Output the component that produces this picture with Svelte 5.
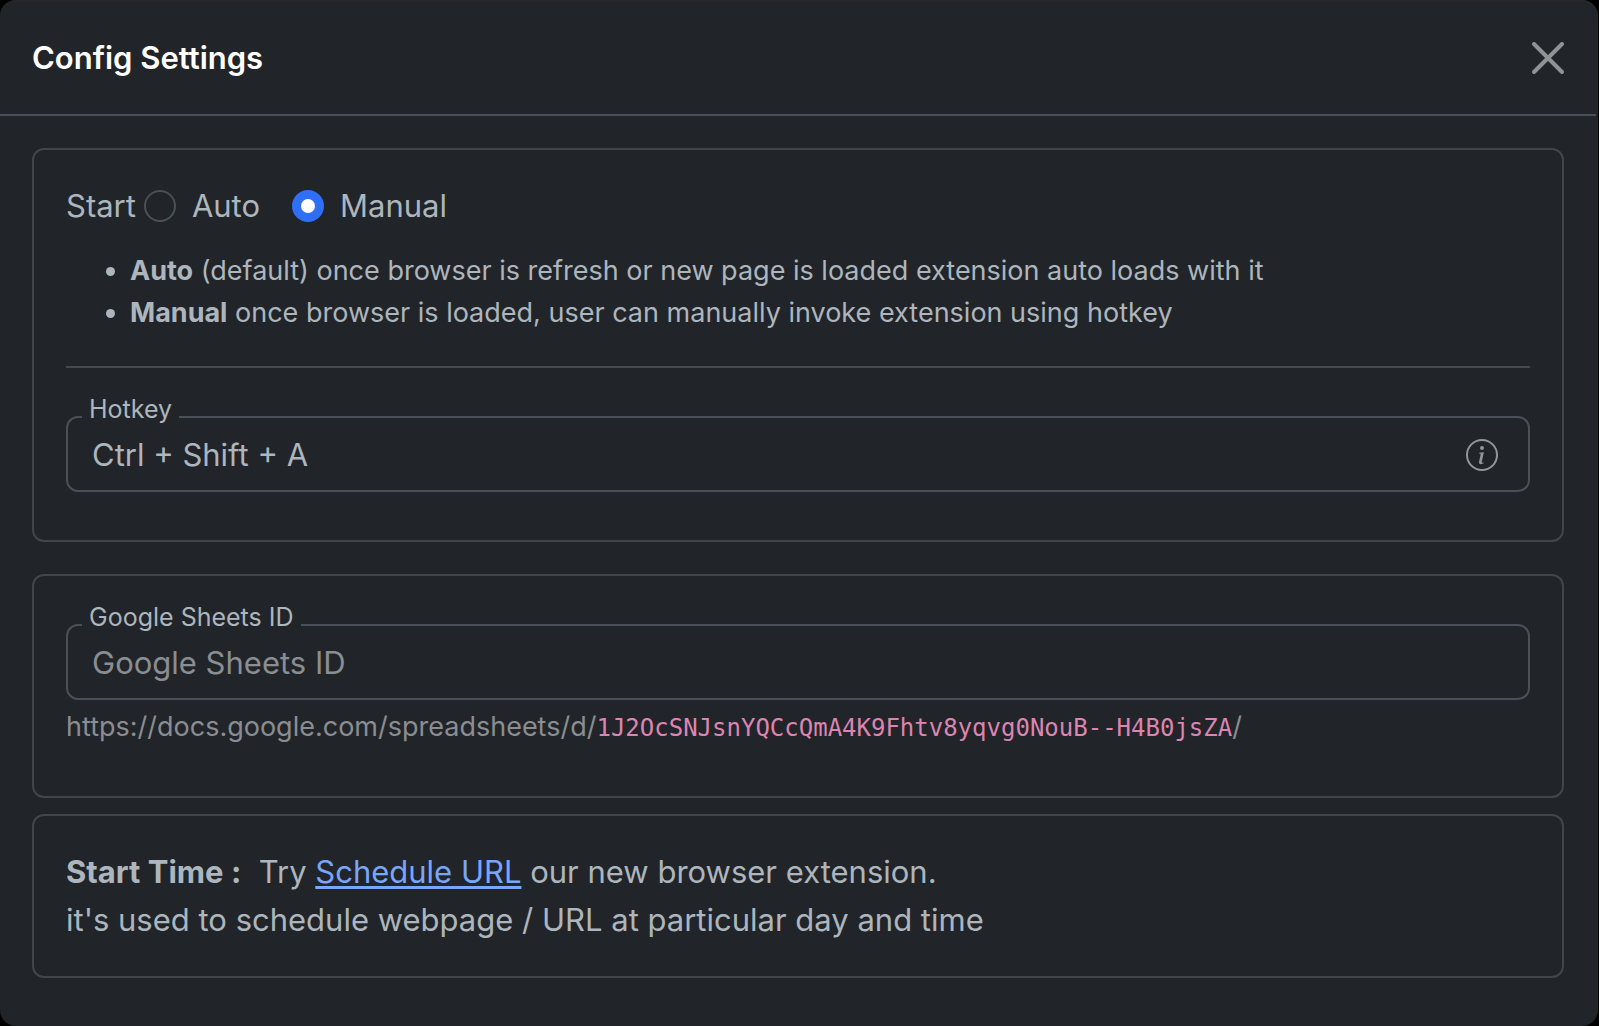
<script>
  let startMode = $state('manual');
  let hotkey = $state('Ctrl + Shift + A');
  let sheetId = $state('');
</script>

<main class="modal">
  <header class="modal-header">
    <h1>Config Settings</h1>
    <button class="close" type="button" aria-label="Close">
      <svg viewBox="0 0 32 32" aria-hidden="true">
        <path d="M2 2 30 30M30 2 2 30" />
      </svg>
    </button>
  </header>

  <div class="modal-body">
    <section class="card start">
      <div class="modes" role="radiogroup" aria-labelledby="start-label">
        <span id="start-label">Start</span>
        <label class="mode">
          <input type="radio" name="start" value="auto" bind:group={startMode} />
          Auto
        </label>
        <label class="mode">
          <input type="radio" name="start" value="manual" bind:group={startMode} />
          Manual
        </label>
      </div>
      <ul>
        <li><strong>Auto</strong> (default) once browser is refresh or new page is loaded extension auto loads with it</li>
        <li><strong>Manual</strong> once browser is loaded, user can manually invoke extension using hotkey</li>
      </ul>
      <hr />
      <div class="field">
        <label for="hotkey">Hotkey</label>
        <input id="hotkey" type="text" bind:value={hotkey} />
        <button class="info" type="button" aria-label="Hotkey information">
          <svg viewBox="0 0 16 16" aria-hidden="true">
            <path d="M8 15A7 7 0 1 1 8 1a7 7 0 0 1 0 14m0 1A8 8 0 1 0 8 0a8 8 0 0 0 0 16" />
            <path d="m8.930 6.588-2.290.287-.082.380.450.083c.294.070.352.176.288.469l-.738 3.468c-.194.897.105 1.319.808 1.319.545 0 1.178-.252 1.465-.598l.088-.416c-.200.176-.492.246-.686.246-.275 0-.375-.193-.304-.533zM9 4.500a1 1 0 1 1-2 0 1 1 0 0 1 2 0" />
          </svg>
        </button>
      </div>
    </section>

    <section class="card sheets">
      <div class="field">
        <label for="sheet-id">Google Sheets ID</label>
        <input id="sheet-id" type="text" placeholder="Google Sheets ID" bind:value={sheetId} />
      </div>
      <p class="hint">https://docs.google.com/spreadsheets/d/<code>1J2OcSNJsnYQCcQmA4K9Fhtv8yqvg0NouB--H4B0jsZA</code>/</p>
    </section>

    <section class="card schedule">
      <p><strong>Start Time :</strong>&nbsp; Try <a href="#schedule-url">Schedule URL</a> our new browser extension.</p>
      <p>it's used to schedule webpage / URL at particular day and time</p>
    </section>
  </div>
</main>

<style>
  :global(body) {
    margin: 0;
    background: #000;
  }

  .modal {
    box-sizing: border-box;
    min-height: 100vh;
    margin-right: 1px;
    padding-right: 2px;
    border-radius: 16px;
    background: #212529;
    box-shadow: inset 0 2px #272729;
    color: #adb5bd;
    font-family: Inter, "Liberation Sans", sans-serif;
    font-size: 31px;
    line-height: 48px;
  }

  .modal-header {
    display: flex;
    align-items: center;
    justify-content: space-between;
    padding: 34px 32px 32px;
    border-bottom: 2px solid #495057;
  }

  h1 {
    margin: 0;
    color: #fff;
    font-size: 31px;
    font-weight: 600;
    line-height: 48px;
  }

  button {
    display: flex;
    padding: 0;
    border: 0;
    background: none;
    cursor: pointer;
  }

  svg {
    width: 32px;
    height: 32px;
  }

  .close {
    color: #909294;
  }

  .close path {
    fill: none;
    stroke: currentColor;
    stroke-width: 4;
    stroke-linecap: round;
  }

  .modal-body {
    padding: 32px 32px 48px;
  }

  .card {
    padding: 32px;
    border: 2px solid #424649;
    border-radius: 12px;
  }

  .start {
    margin-bottom: 32px;
    padding-bottom: 48px;
  }

  .sheets {
    margin-bottom: 16px;
    padding: 48px 32px;
  }

  .modes {
    display: flex;
    align-items: center;
    gap: 32px;
    padding-bottom: 20px;
  }

  #start-label {
    margin-right: -24px;
  }

  .mode {
    display: flex;
    align-items: center;
    gap: 16px;
  }

  input[type='radio'] {
    appearance: none;
    box-sizing: border-box;
    width: 32px;
    height: 32px;
    margin: 0;
    border: 2px solid #495057;
    border-radius: 50%;
  }

  input[type='radio']:checked {
    border: 9px solid #2f6ff6;
    background: #fff;
  }

  ul {
    margin: 0;
    padding-left: 64px;
    font-size: 27px;
    line-height: 42px;
  }

  strong {
    font-weight: 700;
  }

  hr {
    height: 2px;
    margin: 32px 0 48px;
    border: 0;
    background: #464a4e;
  }

  .field {
    position: relative;
    display: flex;
    align-items: center;
    box-sizing: border-box;
    height: 76px;
    padding: 2px 30px 0 24px;
    border: 2px solid #495057;
    border-radius: 12px;
  }

  .field label {
    position: absolute;
    top: -27px;
    left: 14px;
    padding: 0 7px;
    background: #212529;
    font-size: 25px;
    line-height: 36px;
  }

  .field input {
    flex: 1;
    min-width: 0;
    padding: 0;
    border: 0;
    outline: 0;
    background: none;
    color: inherit;
    font: inherit;
  }

  .field input::placeholder {
    color: #8a8d91;
    opacity: 1;
  }

  .info {
    color: #909699;
  }

  .info path {
    fill: currentColor;
  }

  .hint {
    margin: 6px 0 0;
    color: #8a8d91;
    font-size: 27px;
    line-height: 42px;
  }

  code {
    color: #de84b0;
    font-family: "DejaVu Sans Mono", monospace;
    font-size: 24px;
    line-height: 1;
  }

  p {
    margin: 0;
  }

  a {
    color: #78a6fb;
    text-decoration-thickness: 3px;
    text-underline-offset: 3px;
    text-decoration-skip-ink: none;
  }
</style>
